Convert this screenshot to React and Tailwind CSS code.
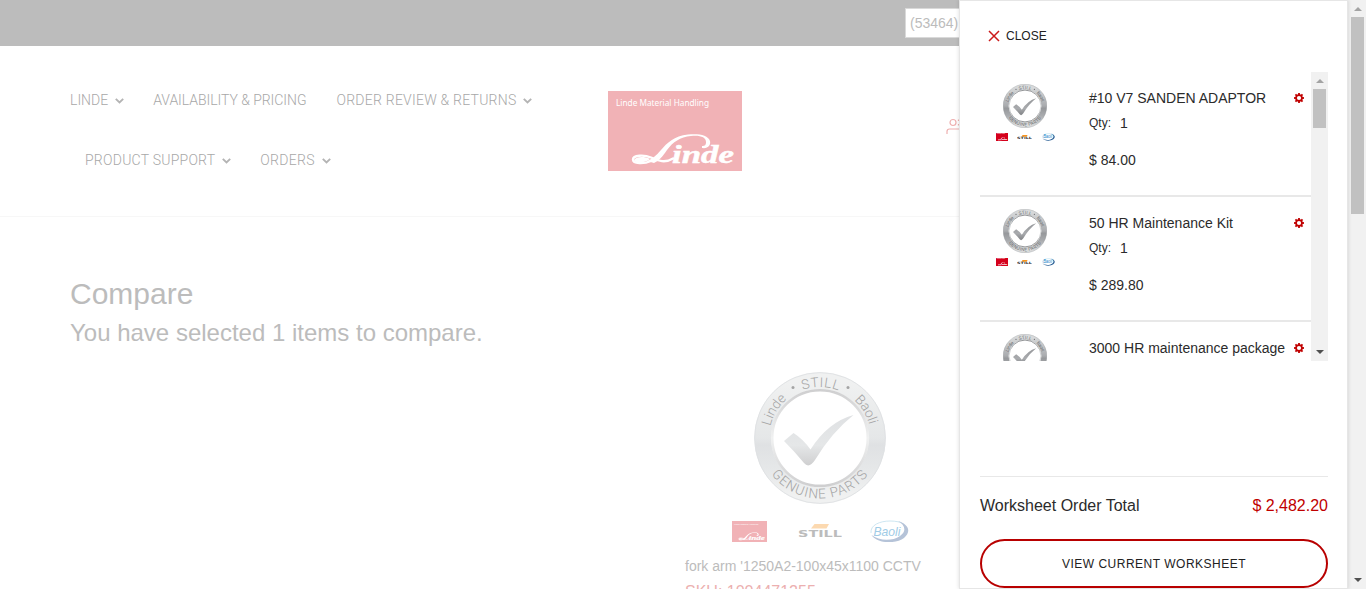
import React from "react";

function Chevron() {
  return (
    <svg className="ml-[7px] mt-[2px] h-[6px] w-[9px]" viewBox="0 0 9 6" fill="none">
      <path d="M0.8 0.9 L4.5 4.5 L8.2 0.9" stroke="#b4b4b4" strokeWidth="1.9" />
    </svg>
  );
}

function NavItem({ label, menu, className = "" }) {
  return (
    <a className={`flex h-[60px] items-center whitespace-nowrap font-[Roboto] text-[14px] font-light text-[#a8a8a8] ${className}`}>
      {label}
      {menu && <Chevron />}
    </a>
  );
}

function LindeLogo({ className, color }) {
  return (
    <svg className={className} viewBox="0 0 134 80" preserveAspectRatio="none">
      <rect width="134" height="80" fill={color} />
      <text x="8" y="15" fontFamily="'Noto Sans'" fontSize="8.6" fill="#fff" textLength="93" lengthAdjust="spacingAndGlyphs">
        Linde Material Handling
      </text>
      <text x="64" y="71.5" fontFamily="'Liberation Serif'" fontStyle="italic" fontWeight="bold" fontSize="26" fill="#fff" stroke="#fff" strokeWidth="0.5" textLength="62" lengthAdjust="spacingAndGlyphs">
        inde
      </text>
      <path
        d="M94 57 C100 58 103 54 102 50 C100 44 91 42.5 80 43.5 C66 45 59 52 53 59 C48 65 44 68 39 70 L46 72 C51 70 55 65 59 59 C65 51 72 46 83 45 C92 44 98 46 98 51 C98 54 97 55 94 55 Z"
        fill="#fff"
      />
      <path d="M43 70 C36 73 25 73 25 68.5 C25 64 36 63.5 43 66.5 C49 69 56 73 65 67.5" fill="none" stroke="#fff" strokeWidth="2.4" strokeLinecap="round" />
      <path d="M26 69 C28 65.5 36 65 42 68 C38 72 27 73 26 69 Z" fill="#fff" />
    </svg>
  );
}

function StillLogo({ className, orange, gray }) {
  return (
    <svg className={className} viewBox="0 0 44 14">
      <path d="M16.5 0 H31 L28.5 4.5 H13 Z" fill={orange} />
      <text x="0" y="12.5" fontFamily="'DejaVu Sans'" fontWeight="bold" fontSize="8.8" fill={gray} textLength="44" lengthAdjust="spacingAndGlyphs">
        STILL
      </text>
    </svg>
  );
}

function BaoliLogo({ className, blue, navy, light }) {
  return (
    <svg className={className} viewBox="0 0 39 22">
      <path d="M1 13 C0 5 10 1 20 1 C26 1 31 2 34 4.5" fill="none" stroke={light} strokeWidth="0.8" />
      <path d="M1.5 15 C7 24 26 24 34 18 C42 11 38 4 28 1 C35 5 37 11 30 16 C22 21.5 9 21 1.5 15 Z" fill={navy} />
      <text x="3.5" y="15.5" fontFamily="'Liberation Sans'" fontStyle="italic" fontSize="13.5" fill={blue} textLength="27" lengthAdjust="spacingAndGlyphs">
        Baoli
      </text>
    </svg>
  );
}

function Seal({ className, id, tones, textColor }) {
  return (
    <svg className={className} viewBox="0 0 132 132">
      <defs>
        <linearGradient id={`${id}-ring`} x1="0" y1="0" x2="0" y2="1">
          <stop offset="0" stopColor={tones[0]} />
          <stop offset="0.5" stopColor={tones[1]} />
          <stop offset="0.56" stopColor={tones[2]} />
          <stop offset="0.75" stopColor={tones[1]} />
          <stop offset="1" stopColor={tones[0]} />
        </linearGradient>
        <linearGradient id={`${id}-rim`} x1="0" y1="0" x2="0" y2="1">
          <stop offset="0" stopColor={tones[3]} />
          <stop offset="0.5" stopColor={tones[0]} />
          <stop offset="1" stopColor={tones[3]} />
        </linearGradient>
        <linearGradient id={`${id}-check`} x1="0" y1="0" x2="0" y2="1">
          <stop offset="0" stopColor={tones[2]} />
          <stop offset="0.6" stopColor={tones[1]} />
          <stop offset="1" stopColor={tones[3]} />
        </linearGradient>
        <path id={`${id}-top`} d="M15 66 A51 51 0 0 1 117 66" />
        <path id={`${id}-bottom`} d="M5.5 66 A60.5 60.5 0 0 0 126.5 66" />
      </defs>
      <circle cx="66" cy="66" r="57.2" fill="none" stroke={`url(#${id}-ring)`} strokeWidth="17" />
      <circle cx="66" cy="66" r="65.4" fill="none" stroke={tones[2]} strokeWidth="0.9" />
      <circle cx="66" cy="66" r="47.8" fill="none" stroke={`url(#${id}-rim)`} strokeWidth="2.6" />
      <path d="M30 69 L39.5 61 Q49 67 56.5 77.5 Q74 50 99.5 43 Q78 60 61 88 Q55 97 50 91 Q41 80 30 69 Z" fill={`url(#${id}-check)`} />
      <g fontFamily="Roboto" fontWeight="300" fontSize="13.5" fill={textColor} textAnchor="middle">
        <text><textPath href={`#${id}-top`} startOffset="17.5%">Linde</textPath></text>
        <text letterSpacing="0.6"><textPath href={`#${id}-top`} startOffset="50.5%">STILL</textPath></text>
        <text><textPath href={`#${id}-top`} startOffset="82.5%">Baoli</textPath></text>
        <text letterSpacing="1"><textPath href={`#${id}-bottom`} startOffset="50%">GENUINE PARTS</textPath></text>
      </g>
      <circle cx="39" cy="15.5" r="1.5" fill={textColor} />
      <circle cx="94" cy="15.5" r="1.5" fill={textColor} />
    </svg>
  );
}

function Gear() {
  const teeth = [0, 45, 90, 135];
  return (
    <svg className="h-[10px] w-[10px] shrink-0" viewBox="0 0 10 10">
      {teeth.map((a) => (
        <rect key={a} x="4.1" y="0" width="1.8" height="10" fill="#c00000" transform={`rotate(${a} 5 5)`} />
      ))}
      <circle cx="5" cy="5" r="3.8" fill="#c00000" />
      <circle cx="5" cy="5" r="2.1" fill="#fff" />
    </svg>
  );
}

function Thumb({ id }) {
  return (
    <div className="flex w-[90px] shrink-0 flex-col items-center pt-[12px]">
      <Seal className="h-[44px] w-[44px]" id={id} tones={["#d8dadb", "#a9abae", "#96989b", "#808285"]} textColor="#3c3c3e" />
      <div className="mt-[5px] flex w-[59px] items-center justify-between">
        <LindeLogo className="h-[8px] w-[12px]" color="#d5001c" />
        <StillLogo className="h-[5px] w-[15px]" orange="#f7941d" gray="#333333" />
        <BaoliLogo className="h-[8px] w-[13px]" blue="#1c86c8" navy="#235a92" light="#67b5dc" />
      </div>
    </div>
  );
}

function CartItem({ id, name, price }) {
  return (
    <li className="flex h-[125px] shrink-0 border-b-2 border-[#e8e8e8]">
      <Thumb id={id} />
      <div className="ml-[19px] flex flex-1 flex-col pr-[7px] text-[#2b2b2b]">
        <div className="mt-[16px] flex h-5 items-center justify-between text-[14px]">
          <span className="whitespace-nowrap">{name}</span>
          <Gear />
        </div>
        <div className="mt-[5px] flex h-5 items-center text-[12px]">
          Qty:<span className="ml-[9px] text-[14px]">1</span>
        </div>
        <div className="mt-[17px] h-5 text-[14px] leading-5">{price}</div>
      </div>
    </li>
  );
}

function Arrow({ up, className, color }) {
  return (
    <svg className={className} viewBox="0 0 8 4">
      <path d={up ? "M0 4 L4 0 L8 4 Z" : "M0 0 L4 4 L8 0 Z"} fill={color} />
    </svg>
  );
}

const items = [
  { id: "seal-a", name: "#10 V7 SANDEN ADAPTOR", price: "$ 84.00" },
  { id: "seal-b", name: "50 HR Maintenance Kit", price: "$ 289.80" },
  { id: "seal-c", name: "3000 HR maintenance package", price: "" },
];

export default function App() {
  return (
    <div className="flex h-[589px] w-[1366px] overflow-hidden bg-white font-['Liberation_Sans',Arial,sans-serif]">
      <main className="h-[589px] w-[959px] shrink-0 overflow-hidden">
        <div className="flex h-[46px] justify-end bg-[#bcbcbc] pt-2">
          <div className="flex h-[30px] w-[54px] items-center overflow-hidden border border-r-0 border-[#d9d9d9] bg-white pl-1 text-[14px] whitespace-nowrap text-[#bcbcbc]">
            (53464)
          </div>
        </div>
        <header className="flex h-[171px] border-b border-[#f7f7f7] pl-[70px]">
          <nav className="w-[538px] shrink-0 pt-[24px]">
            <div className="flex">
              <NavItem label="LINDE" menu />
              <NavItem label="AVAILABILITY & PRICING" className="ml-[29px] tracking-[-0.04px]" />
              <NavItem label="ORDER REVIEW & RETURNS" menu className="ml-[30px] tracking-[0.24px]" />
            </div>
            <div className="flex pl-[15px]">
              <NavItem label="PRODUCT SUPPORT" menu className="tracking-[0.24px]" />
              <NavItem label="ORDERS" menu className="ml-[29px] tracking-[0.3px]" />
            </div>
          </nav>
          <LindeLogo className="mt-[45px] h-[80px] w-[134px] shrink-0" color="#f1b2b6" />
          <svg className="mt-[72px] ml-[204px] h-[17px] w-[13px] shrink-0" viewBox="0 0 13 17" fill="none" stroke="#eeb0b0" strokeWidth="1.2">
            <circle cx="7" cy="4.5" r="3" />
            <path d="M1 16 V13.5 Q1 11 3.5 11 H13 M12.5 1.5 V3 M12.5 6 V7.5" />
          </svg>
        </header>
        <section className="pt-[59px] pl-[70px] text-[#bcbcbc]">
          <h1 className="h-[36px] text-[30px] leading-[36px]">Compare</h1>
          <h2 className="mt-[7px] h-[28px] text-[24px] leading-[28px]">You have selected 1 items to compare.</h2>
        </section>
        <article className="mt-[25px] ml-[685px] w-[270px]">
          <Seal className="ml-[69px] h-[132px] w-[132px]" id="seal-main" tones={["#f0f1f1", "#e5e7e8", "#dfe1e3", "#cfcfd0"]} textColor="#a4a4a4" />
          <div className="mt-[16px] ml-[47px] flex h-[22px] w-[178px] items-center">
            <LindeLogo className="h-[21px] w-[35px]" color="#f1b2b6" />
            <StillLogo className="ml-[31px] h-[14px] w-[44px]" orange="#fcd9b0" gray="#bcbcbc" />
            <BaoliLogo className="ml-[28px] h-[22px] w-[39px]" blue="#a0cbe6" navy="#b5c3d8" light="#c0dfee" />
          </div>
          <p className="mt-[14px] h-5 text-[14px] leading-5 whitespace-nowrap text-[#bcbcbc]">fork arm '1250A2-100x45x1100 CCTV</p>
          <p className="mt-[6px] h-5 text-[16px] leading-5 whitespace-nowrap text-[#ecb0b0]">SKU: 1004471255</p>
        </article>
      </main>

      <aside className="relative flex h-[589px] w-[389px] shrink-0 flex-col border border-[#e6e6e6] bg-white px-[20px] shadow-[0_0_4px_rgba(0,0,0,0.14)]">
        <button className="mt-[25px] ml-[8px] flex h-5 items-center text-[12px] text-[#222]">
          <svg className="mb-px h-[12px] w-[12px]" viewBox="0 0 12 12" fill="none" stroke="#cc1a1a" strokeWidth="1.5">
            <path d="M1 1 L11 11 M11 1 L1 11" />
          </svg>
          <span className="ml-[6px]">CLOSE</span>
        </button>
        <div className="mt-[26px] flex h-[289px] w-[348px] overflow-hidden">
          <ul className="flex w-[331px] flex-col overflow-hidden">
            {items.map((item) => <CartItem key={item.id} {...item} />)}
          </ul>
          <div className="flex w-[17px] flex-col items-center bg-[#f1f1f1]">
            <Arrow up className="mt-[7px] h-[4px] w-[8px] shrink-0" color="#a3a3a3" />
            <div className="mt-[6px] h-[39px] w-[13px] bg-[#c1c1c1]" />
            <Arrow className="mt-auto mb-[7px] h-[4px] w-[8px] shrink-0" color="#505050" />
          </div>
        </div>
        <div className="mt-[115px] flex h-[59px] w-[348px] items-center justify-between border-t border-[#e8e8e8] text-[16px] text-[#2b2b2b]">
          <span>Worksheet Order Total</span>
          <span className="text-[#c00000]">$ 2,482.20</span>
        </div>
        <button className="mt-[4px] h-[49px] w-[348px] shrink-0 rounded-full border-2 border-[#b80000] text-[12px] tracking-[0.5px] text-[#222]">
          VIEW CURRENT WORKSHEET
        </button>
      </aside>

      <div className="flex h-[589px] w-[18px] shrink-0 flex-col items-center bg-[#f1f1f1]">
        <Arrow up className="mt-[7px] ml-px h-[4px] w-[8px] shrink-0" color="#a3a3a3" />
        <div className="mt-[6px] ml-px h-[197px] w-[13px] bg-[#c1c1c1]" />
        <Arrow className="mt-auto mb-[7px] ml-px h-[4px] w-[8px] shrink-0" color="#505050" />
      </div>
    </div>
  );
}
